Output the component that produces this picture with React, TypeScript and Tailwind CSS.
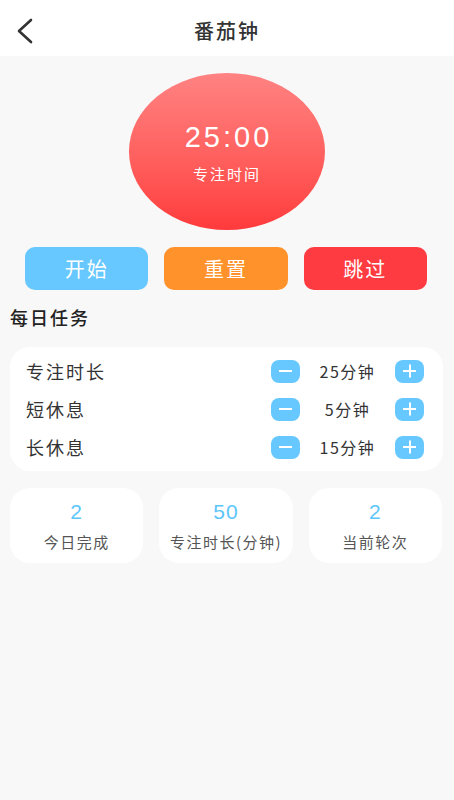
import React from "react";

const font = { fontFamily: '"Noto Sans CJK SC", "Noto Sans", sans-serif' };
const latin = { fontFamily: '"Liberation Sans", "Noto Sans", sans-serif' };

function Stepper({ label, value }: { label: string; value: string }) {
  return (
    <div className="flex h-[38px] items-center">
      <div className="flex-1 text-[18px] tracking-[2px] text-[#333]">{label}</div>
      <button className="flex h-[23px] w-[29px] items-center justify-center rounded-[8px] bg-[#66c8ff]">
        <span className="block h-[2px] w-[13px] bg-white" />
      </button>
      <div className="w-[95px] text-center text-[16px] tracking-[1.5px] text-[#333]">{value}</div>
      <button className="relative flex h-[23px] w-[29px] items-center justify-center rounded-[8px] bg-[#66c8ff]">
        <span className="block h-[2px] w-[13px] bg-white" />
        <span className="absolute left-1/2 top-1/2 block h-[13px] w-[2px] -translate-x-1/2 -translate-y-1/2 bg-white" />
      </button>
    </div>
  );
}

function Stat({ n, label }: { n: string; label: string }) {
  return (
    <div className="flex h-[75px] flex-1 flex-col items-center justify-center rounded-[20px] bg-white">
      <div className="text-[21px] leading-[24px] tracking-[1px] text-[#5cc6fb]" style={latin}>{n}</div>
      <div className="mt-[8px] text-[15px] leading-[20px] tracking-[1.5px] text-[#555]">{label}</div>
    </div>
  );
}

export default function App() {
  return (
    <div className="min-h-[800px] w-[454px] bg-[#f8f8f8]" style={font}>
      <div className="relative flex h-[56px] items-center justify-center bg-white pt-[6px]">
        <svg className="absolute left-[14px] top-[18px]" width="22" height="26" viewBox="0 0 22 26">
          <path d="M17 2 L5 13 L17 24" fill="none" stroke="#333" strokeWidth="2.6" strokeLinecap="round" strokeLinejoin="round" />
        </svg>
        <div className="text-[20px] font-medium tracking-[2px] text-[#333]">番茄钟</div>
      </div>

      <div className="flex justify-center pt-[17px]">
        <div className="flex h-[157px] w-[196px] flex-col items-center justify-center rounded-[50%] bg-gradient-to-b from-[#ff8282] to-[#ff393c]">
          <div className="pl-[3px] text-[29px] leading-[34px] tracking-[3px] text-white" style={latin}>25:00</div>
          <div className="mt-[10px] text-[15px] leading-[20px] tracking-[2px] text-white">专注时间</div>
        </div>
      </div>

      <div className="mt-[17px] flex gap-[16px] pl-[25px] pr-[27px]">
        <button className="h-[43px] flex-1 rounded-[10px] bg-[#66c8ff] text-[20px] tracking-[2px] text-white">开始</button>
        <button className="h-[43px] flex-1 rounded-[10px] bg-[#ff922b] text-[20px] tracking-[2px] text-white">重置</button>
        <button className="h-[43px] flex-1 rounded-[10px] bg-[#ff3b42] text-[20px] tracking-[2px] text-white">跳过</button>
      </div>

      <div className="mt-[13px] px-[10px] text-[18px] font-medium leading-[28px] tracking-[2px] text-[#222]">每日任务</div>

      <div className="ml-[10px] mr-[11px] mt-[16px] rounded-[20px] bg-white py-[5px] pl-[16px] pr-[19px]">
        <Stepper label="专注时长" value="25分钟" />
        <Stepper label="短休息" value="5分钟" />
        <Stepper label="长休息" value="15分钟" />
      </div>

      <div className="ml-[10px] mr-[12px] mt-[17px] flex gap-[16px]">
        <Stat n="2" label="今日完成" />
        <Stat n="50" label="专注时长(分钟)" />
        <Stat n="2" label="当前轮次" />
      </div>
    </div>
  );
}
